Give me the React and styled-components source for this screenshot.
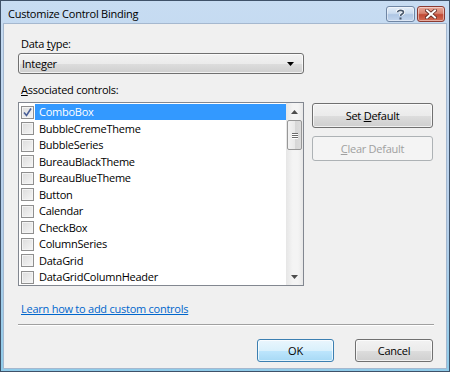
import React from 'react';
import styled, { createGlobalStyle } from 'styled-components';

const GlobalStyle = createGlobalStyle`
  body {
    margin: 0;
    background: #ffffff;
    font-family: 'Open Sans', 'Liberation Sans', sans-serif;
    font-size: 11px;
    letter-spacing: -0.25px;
    color: #000;
  }
`;

const Window = styled.div`
  width: 450px;
  height: 372px;
  box-sizing: border-box;
  border: 1px solid #3f5269;
  background: linear-gradient(#c7dcf2, #b6cfea 60%, #8fcbe9);
  display: flex;
  flex-direction: column;
  padding: 0 2px 2px 2px;
`;

const TitleBar = styled.div`
  height: 22px;
  display: flex;
  align-items: center;
  padding-left: 5px;
  padding-right: 2px;
`;

const Title = styled.div`
  flex: 1;
  color: #000;
  margin-top: 2px;
`;

const CaptionButton = styled.div`
  height: 16px;
  box-sizing: border-box;
  border-radius: 3px;
  display: flex;
  align-items: center;
  justify-content: center;
  margin-left: 2px;
  margin-top: 4px;
  width: ${({ $w }) => $w}px;
  border: 1px solid ${({ $close }) => ($close ? '#8b3b32' : '#6f86a4')};
  background: ${({ $close }) =>
    $close
      ? 'linear-gradient(#e9a898, #d7826f 45%, #c14a35 55%, #d36c55)'
      : 'linear-gradient(#e4eef9, #cbdcf0 45%, #aec6e4 55%, #c3d6ee)'};
  box-shadow: inset 0 0 0 1px rgba(255, 255, 255, 0.45);
`;

const Client = styled.div`
  flex: 1;
  background: #f0f0f0;
  border: 1px solid #a5b8cf;
  display: flex;
  flex-direction: column;
  padding: 12px 11px 0 14px;
`;

const Label = styled.div`
  line-height: 16px;
  padding-left: 3px;
  margin-bottom: ${({ $mb }) => $mb}px;
`;

const Combo = styled.div`
  width: 286px;
  height: 21px;
  box-sizing: border-box;
  border: 1px solid #707070;
  border-radius: 3px;
  background: linear-gradient(#f2f2f2, #ebebeb 50%, #dddddd 51%, #cfcfcf);
  box-shadow: inset 0 0 0 1px rgba(255, 255, 255, 0.7);
  display: flex;
  align-items: center;
  padding: 0 9px 0 3px;
  margin-bottom: 8px;
`;

const ComboText = styled.div`
  flex: 1;
`;

const MainRow = styled.div`
  display: flex;
  gap: 8px;
  align-items: flex-start;
`;

const ListBox = styled.div`
  width: 286px;
  height: 184px;
  box-sizing: border-box;
  border: 1px solid #828790;
  background: #fff;
  display: flex;
`;

const Rows = styled.div`
  flex: 1;
  padding-top: 1px;
`;

const Row = styled.div`
  height: 16.5px;
  display: flex;
  align-items: center;
  padding-left: 2px;
`;

const Box = styled.div`
  width: 13px;
  height: 13px;
  box-sizing: border-box;
  border: 1px solid #8f8f8f;
  background: linear-gradient(135deg, #dcdcdc, #f6f6f6);
  box-shadow: inset 0 0 0 1px #f4f4f4;
  display: flex;
  align-items: center;
  justify-content: center;
  flex-shrink: 0;
`;

const ItemText = styled.div`
  flex: 1;
  height: 16px;
  line-height: 16px;
  margin-left: 1px;
  padding-left: 4px;
  background: ${({ $selected }) => ($selected ? '#3399ff' : 'transparent')};
  color: ${({ $selected }) => ($selected ? '#fff' : '#000')};
`;

const ScrollBar = styled.div`
  width: 17px;
  background: linear-gradient(90deg, #e6e6e6, #f4f4f4 40%, #f4f4f4 70%, #e8e8e8);
  display: flex;
  flex-direction: column;
  align-items: center;
`;

const Arrow = styled.div`
  height: 17px;
  display: flex;
  align-items: center;
  justify-content: center;
`;

const Thumb = styled.div`
  width: 15px;
  height: 30px;
  box-sizing: border-box;
  border: 1px solid #979797;
  border-radius: 2px;
  background: linear-gradient(90deg, #f3f3f3, #e9e9e9 50%, #d6d6d6 51%, #dcdcdc);
  display: flex;
  flex-direction: column;
  align-items: center;
  justify-content: center;
  gap: 1px;
`;

const Grip = styled.div`
  width: 6px;
  height: 1px;
  background: #6b6b6b;
  box-shadow: 0 1px 0 #fff;
`;

const Spacer = styled.div`
  flex: 1;
`;

const SideColumn = styled.div`
  display: flex;
  flex-direction: column;
  gap: 8px;
  padding-top: 1px;
`;

const Button = styled.div`
  width: ${({ $w }) => $w}px;
  height: ${({ $h }) => $h}px;
  box-sizing: border-box;
  border-radius: 3px;
  display: flex;
  align-items: center;
  justify-content: center;
  border: 1px solid ${({ $disabled, $primary }) => ($disabled ? '#adb2b5' : $primary ? '#3c7fb1' : '#707070')};
  background: ${({ $disabled, $primary }) =>
    $disabled
      ? '#f4f4f4'
      : $primary
      ? 'linear-gradient(#eaf6fd, #d9f0fc 50%, #bee6fd 51%, #a7d9f5)'
      : 'linear-gradient(#f2f2f2, #ebebeb 50%, #dddddd 51%, #cfcfcf)'};
  color: ${({ $disabled }) => ($disabled ? '#a0a0a0' : '#000')};
  box-shadow: inset 0 0 0 1px ${({ $disabled }) => ($disabled ? 'transparent' : 'rgba(255,255,255,0.7)')};
`;

const Link = styled.a`
  color: #0066cc;
  text-decoration: underline;
  line-height: 16px;
  margin: 15px 0 0 3px;
  align-self: flex-start;
`;

const Separator = styled.div`
  height: 1px;
  background: #a0a0a0;
  border-bottom: 1px solid #ffffff;
  margin-top: 7px;
  margin-right: 1px;
`;

const Footer = styled.div`
  display: flex;
  justify-content: flex-end;
  gap: 21px;
  margin-top: 13px;
  padding-right: 2px;
`;

const items = [
  'ComboBox',
  'BubbleCremeTheme',
  'BubbleSeries',
  'BureauBlackTheme',
  'BureauBlueTheme',
  'Button',
  'Calendar',
  'CheckBox',
  'ColumnSeries',
  'DataGrid',
  'DataGridColumnHeader',
];

const App = () => (
  <>
    <GlobalStyle />
    <Window>
      <TitleBar>
        <Title>Customize Control Binding</Title>
        <CaptionButton $w={29}>
          <svg width="9" height="11" viewBox="0 0 9 11">
            <path d="M1.5 3.2 C1.5 0.8 7.5 0.8 7.5 3.2 C7.5 5 4.5 5 4.5 7" fill="none" stroke="#fff" strokeWidth="3.2" />
            <path d="M1.5 3.2 C1.5 0.8 7.5 0.8 7.5 3.2 C7.5 5 4.5 5 4.5 7" fill="none" stroke="#46566b" strokeWidth="1.6" />
            <rect x="3.5" y="8.5" width="2" height="2" fill="#46566b" />
          </svg>
        </CaptionButton>
        <CaptionButton $w={28} $close>
          <svg width="12" height="10" viewBox="0 0 12 10">
            <path d="M2 1.5 L10 8.5 M10 1.5 L2 8.5" stroke="#5a2620" strokeWidth="3.6" strokeLinecap="square" />
            <path d="M2 1.5 L10 8.5 M10 1.5 L2 8.5" stroke="#fff" strokeWidth="2" strokeLinecap="square" />
          </svg>
        </CaptionButton>
      </TitleBar>
      <Client>
        <Label $mb={1}>
          Data <u>t</u>ype:
        </Label>
        <Combo>
          <ComboText>Integer</ComboText>
          <svg width="7" height="4" viewBox="0 0 7 4">
            <path d="M0 0 H7 L3.5 4 Z" fill="#000" />
          </svg>
        </Combo>
        <Label $mb={4}>
          <u>A</u>ssociated controls:
        </Label>
        <MainRow>
          <ListBox>
            <Rows>
              {items.map((item, i) => (
                <Row key={item}>
                  <Box>
                    {i === 0 && (
                      <svg width="9" height="9" viewBox="0 0 9 9">
                        <path d="M1 4.5 L3.5 7.5 L8 0.5" fill="none" stroke="#4a5f97" strokeWidth="1.6" />
                      </svg>
                    )}
                  </Box>
                  <ItemText $selected={i === 0}>{item}</ItemText>
                </Row>
              ))}
            </Rows>
            <ScrollBar>
              <Arrow>
                <svg width="7" height="4" viewBox="0 0 7 4">
                  <path d="M3.5 0 L7 4 H0 Z" fill="#4d4d4d" />
                </svg>
              </Arrow>
              <Thumb>
                <Grip />
                <Grip />
                <Grip />
              </Thumb>
              <Spacer />
              <Arrow>
                <svg width="7" height="4" viewBox="0 0 7 4">
                  <path d="M0 0 H7 L3.5 4 Z" fill="#4d4d4d" />
                </svg>
              </Arrow>
            </ScrollBar>
          </ListBox>
          <SideColumn>
            <Button $w={121} $h={25}>
              <span>
                Set <u>D</u>efault
              </span>
            </Button>
            <Button $w={121} $h={25} $disabled>
              <span>
                <u>C</u>lear Default
              </span>
            </Button>
          </SideColumn>
        </MainRow>
        <Link href="#">Learn how to add custom controls</Link>
        <Separator />
        <Footer>
          <Button $w={77} $h={23} $primary>
            OK
          </Button>
          <Button $w={78} $h={23}>
            Cancel
          </Button>
        </Footer>
      </Client>
    </Window>
  </>
);

export default App;
